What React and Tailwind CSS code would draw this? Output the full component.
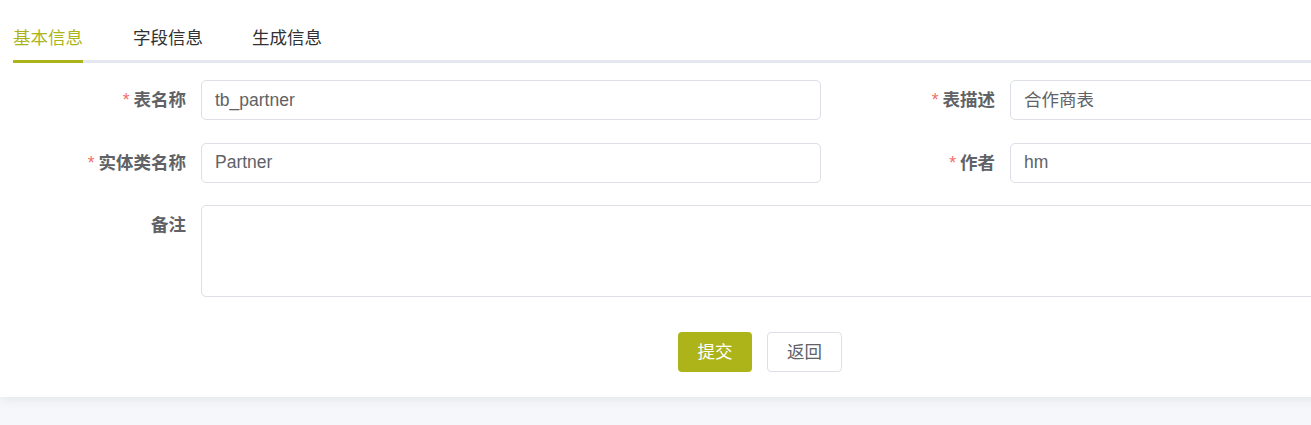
export default function App() {
  const font = { fontFamily: '"Liberation Sans", "Noto Sans CJK SC", sans-serif' };
  const Label = ({ text, required }) => (
    <div className="w-[188px] shrink-0 pr-[15px] text-right text-[17.5px] font-bold leading-[40px] text-[#606266]">
      {required && <span className="mr-[4px] font-normal text-[#f56c6c]">*</span>}
      {text}
    </div>
  );
  const Input = ({ value }) => (
    <div className="flex h-[40px] flex-1 items-center rounded-[5px] border border-[#dcdfe6] bg-white px-[13px] text-[17.5px] text-[#606266]">
      {value}
    </div>
  );
  return (
    <div className="min-h-[425px] w-full overflow-hidden bg-[#f6f7fb]" style={font}>
      <div className="w-[1660px] bg-white pb-[25px] pl-[13px] pt-[16px] shadow-[0_2px_12px_0_rgba(0,0,0,0.08)]">
        <div className="flex h-[44px] w-[1618px] border-b-[3px] border-[#e4e7ed] box-content">
          <div className="-mb-[3px] box-content border-b-[3px] border-[#adb419] text-[17.5px] leading-[44px] text-[#adb419]">
            基本信息
          </div>
          <div className="pl-[50px] text-[17.5px] leading-[44px] text-[#303133]">字段信息</div>
          <div className="pl-[49px] text-[17.5px] leading-[44px] text-[#303133]">生成信息</div>
        </div>
        <div className="mt-[17px] flex flex-col gap-[22.5px]">
          <div className="flex">
            <div className="flex w-[808px]">
              <Label text="表名称" required />
              <Input value="tb_partner" />
            </div>
            <div className="flex w-[809px] pl-[1px]">
              <Label text="表描述" required />
              <Input value="合作商表" />
            </div>
          </div>
          <div className="flex">
            <div className="flex w-[808px]">
              <Label text="实体类名称" required />
              <Input value="Partner" />
            </div>
            <div className="flex w-[809px] pl-[1px]">
              <Label text="作者" required />
              <Input value="hm" />
            </div>
          </div>
          <div className="flex w-[1618px]">
            <Label text="备注" />
            <div className="h-[92px] flex-1 rounded-[5px] border border-[#dcdfe6] bg-white"></div>
          </div>
        </div>
        <div className="mt-[35px] flex gap-[15px] pl-[665px]">
          <button className="h-[40px] w-[74px] rounded-[4px] bg-[#adb419] text-[17.5px] text-white">提交</button>
          <button className="h-[40px] w-[75px] rounded-[4px] border border-[#dcdfe6] bg-white text-[17.5px] text-[#606266]">返回</button>
        </div>
      </div>
    </div>
  );
}
